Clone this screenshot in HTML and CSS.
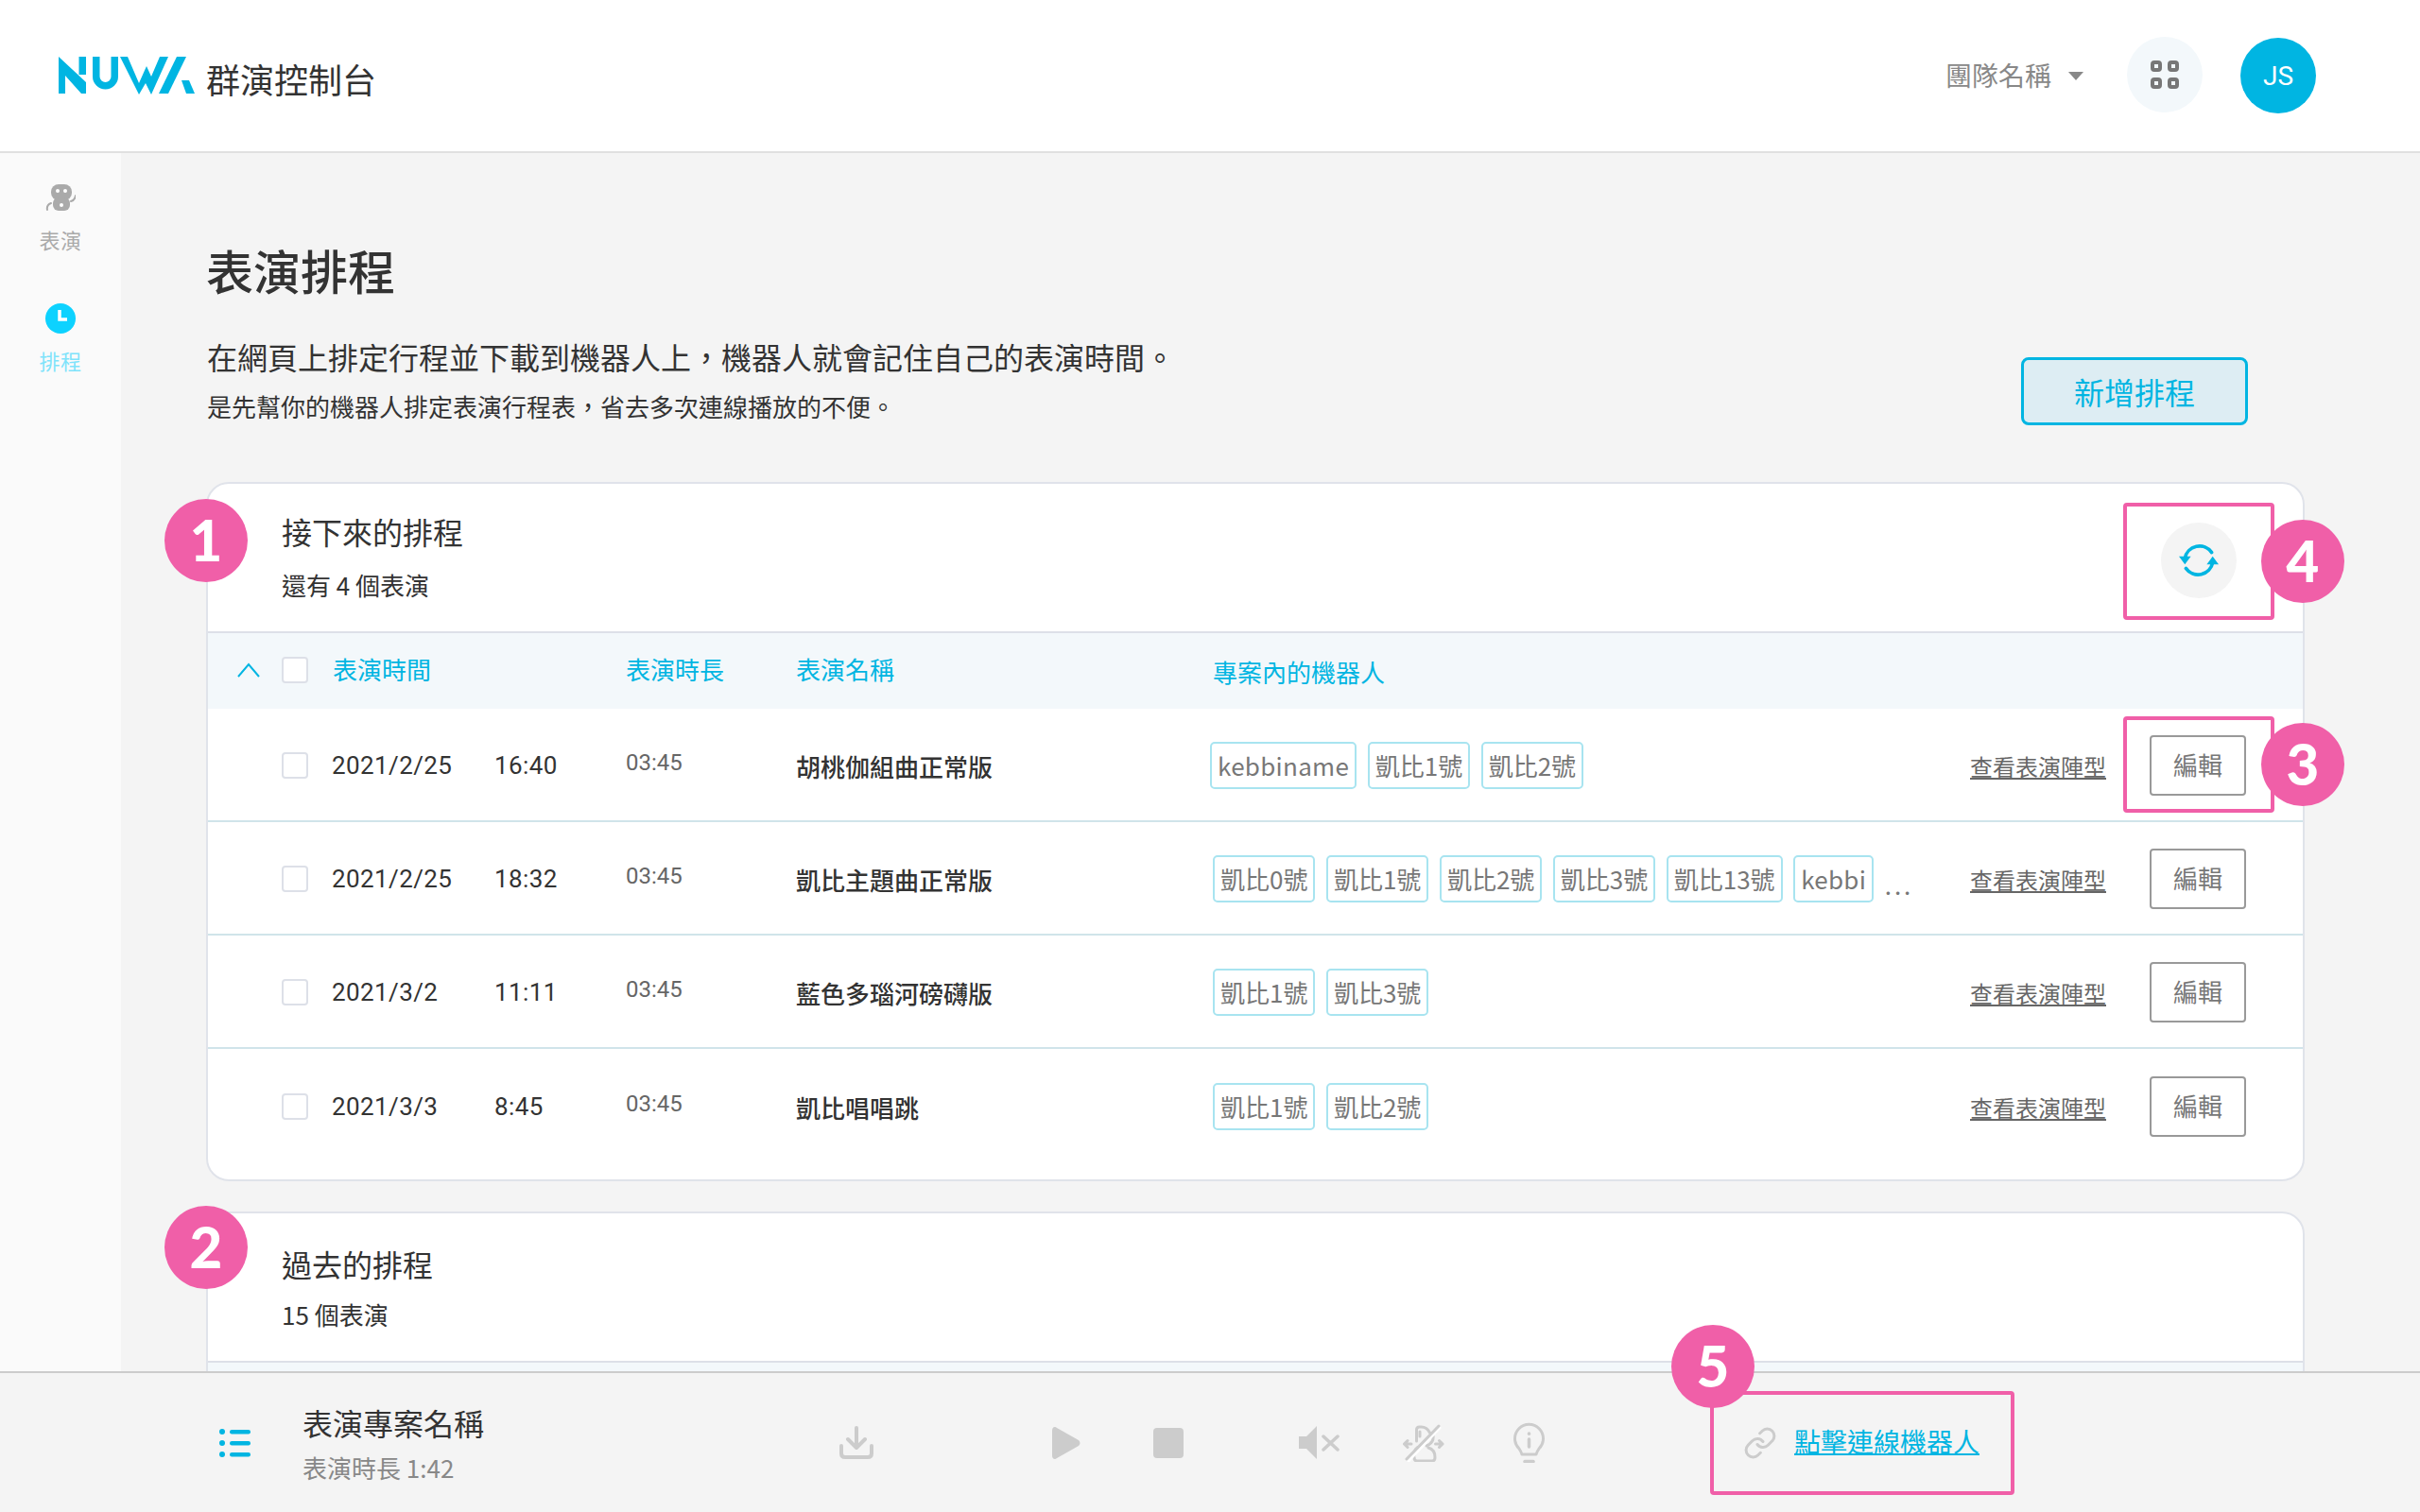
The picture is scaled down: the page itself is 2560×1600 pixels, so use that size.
FILE: index.html
```html
<!DOCTYPE html>
<html lang="zh-Hant">
<head>
  <meta charset="UTF-8">
  <title>群演控制台</title>
  <link rel="stylesheet" href="styles.css">
</head>
<body>
  <div class="app">
    <!-- top bar -->
    <header class="topbar">
      <svg class="logo" viewBox="0 0 144 40" aria-label="NUWA">
        <polygon points="0,0 29,27 29,39 24,39 7,20 7,39 0,39"/>
        <rect x="21.500" y="0" width="7.500" height="19"/>
        <path d="M36 0v21a13.500 13.500 0 0 0 27 0V0h-7.500v21a6 6 0 0 1-12 0V0z"/>
        <polygon points="65,0 73,0 85,28 93,10 98,21 107,0 116,0 98,40 92,28 85,40"/>
        <polygon points="125,0 135,0 116,39 106,39"/>
        <polygon points="130,25 138,25 144,39 135,39"/>
      </svg>
      <span class="app-name">群演控制台</span>
      <div class="topbar-right">
        <span class="team">團隊名稱</span>
        <span class="team-arrow"></span>
        <button class="apps-btn">
          <svg viewBox="0 0 30 30" width="30" height="30">
            <rect x="2" y="2" width="8" height="8" rx="2"/>
            <rect x="20" y="2" width="8" height="8" rx="2"/>
            <rect x="2" y="20" width="8" height="8" rx="2"/>
            <rect x="20" y="20" width="8" height="8" rx="2"/>
          </svg>
        </button>
        <div class="avatar">JS</div>
      </div>
    </header>

    <div class="middle">
      <!-- side nav -->
      <nav class="sidebar">
        <a class="nav-item">
          <svg class="nav-icon" viewBox="0 0 32 32">
            <rect x="6" y="2" width="22" height="17" rx="8" fill="#aaa"/>
            <rect x="8" y="16" width="18" height="14" rx="6" fill="#aaa"/>
            <circle cx="13" cy="9" r="2" fill="#fff"/>
            <circle cx="21" cy="9" r="2" fill="#fff"/>
            <circle cx="17" cy="24" r="2" fill="#fff"/>
            <path d="M27 20q4-1 5-6M2 29q-1-5 4-7" fill="none" stroke="#aaa" stroke-width="2" stroke-linecap="round"/>
          </svg>
          <span>表演</span>
        </a>
        <a class="nav-item active">
          <svg class="nav-icon" viewBox="0 0 32 32">
            <circle cx="16" cy="16" r="16" fill="#0dd2ff"/>
            <path d="M15 7v10h8" fill="none" stroke="#fff" stroke-width="3.500"/>
          </svg>
          <span>排程</span>
        </a>
      </nav>

      <main class="content">
        <section class="intro">
          <div>
            <h1>表演排程</h1>
            <p class="intro-lead">在網頁上排定行程並下載到機器人上，機器人就會記住自己的表演時間。</p>
            <p class="intro-sub">是先幫你的機器人排定表演行程表，省去多次連線播放的不便。</p>
          </div>
          <button class="add-btn">新增排程</button>
        </section>

        <!-- upcoming -->
        <section class="card">
          <div class="card-head">
            <div>
              <h2>接下來的排程</h2>
              <p>還有 4 個表演</p>
            </div>
            <button class="refresh-btn">
              <svg viewBox="0 0 40 36" width="42" height="38" fill="none" stroke="#00b5e2" stroke-width="3.500" stroke-linecap="round">
                <path d="M33 10A15 15 0 0 0 6 16"/>
                <path d="M7 26A15 15 0 0 0 34 20"/>
                <polygon points="0,14 12,14 6,22" fill="#00b5e2" stroke="none"/>
                <polygon points="28,22 40,22 34,14" fill="#00b5e2" stroke="none"/>
              </svg>
            </button>
          </div>

          <div class="row table-head">
            <svg class="chevron" viewBox="0 0 24 16" width="24" height="16">
              <polyline points="1,15 12,2 23,15" fill="none" stroke="#00b5e2" stroke-width="2"/>
            </svg>
            <span class="checkbox"></span>
            <span class="span-two">表演時間</span>
            <span>表演時長</span>
            <span>表演名稱</span>
            <span class="head-robots">專案內的機器人</span>
          </div>

          <div class="row item">
            <span></span>
            <span class="checkbox"></span>
            <span class="date">2021/2/25</span>
            <span class="date">16:40</span>
            <span class="length">03:45</span>
            <span class="show-name">胡桃伽組曲正常版</span>
            <div class="tags tags-first">
              <span class="tag tag-latin">kebbiname</span>
              <span class="tag">凱比1號</span>
              <span class="tag">凱比2號</span>
            </div>
            <a class="formation">查看表演陣型</a>
            <button class="edit-btn">編輯</button>
          </div>

          <div class="row item">
            <span></span>
            <span class="checkbox"></span>
            <span class="date">2021/2/25</span>
            <span class="date">18:32</span>
            <span class="length">03:45</span>
            <span class="show-name">凱比主題曲正常版</span>
            <div class="tags">
              <span class="tag">凱比0號</span>
              <span class="tag">凱比1號</span>
              <span class="tag">凱比2號</span>
              <span class="tag">凱比3號</span>
              <span class="tag">凱比13號</span>
              <span class="tag tag-latin">kebbi</span>
              <span class="more">...</span>
            </div>
            <a class="formation">查看表演陣型</a>
            <button class="edit-btn">編輯</button>
          </div>

          <div class="row item">
            <span></span>
            <span class="checkbox"></span>
            <span class="date">2021/3/2</span>
            <span class="date">11:11</span>
            <span class="length">03:45</span>
            <span class="show-name">藍色多瑙河磅礴版</span>
            <div class="tags">
              <span class="tag">凱比1號</span>
              <span class="tag">凱比3號</span>
            </div>
            <a class="formation">查看表演陣型</a>
            <button class="edit-btn">編輯</button>
          </div>

          <div class="row item">
            <span></span>
            <span class="checkbox"></span>
            <span class="date">2021/3/3</span>
            <span class="date">8:45</span>
            <span class="length">03:45</span>
            <span class="show-name">凱比唱唱跳</span>
            <div class="tags">
              <span class="tag">凱比1號</span>
              <span class="tag">凱比2號</span>
            </div>
            <a class="formation">查看表演陣型</a>
            <button class="edit-btn">編輯</button>
          </div>
        </section>

        <!-- past -->
        <section class="card card-past">
          <div class="card-head">
            <div>
              <h2>過去的排程</h2>
              <p>15 個表演</p>
            </div>
          </div>
          <div class="row table-head"></div>
        </section>
      </main>
    </div>

    <!-- player bar -->
    <footer class="player">
      <svg class="list-icon" viewBox="0 0 33 30" width="33" height="30">
        <ellipse cx="3" cy="3" rx="3" ry="3"/>
        <ellipse cx="3" cy="15" rx="3" ry="3"/>
        <ellipse cx="3" cy="27" rx="3" ry="3"/>
        <rect x="11" y="1" width="22" height="4.500" rx="2.200"/>
        <rect x="11" y="13" width="22" height="4.500" rx="2.200"/>
        <rect x="11" y="25" width="22" height="4.500" rx="2.200"/>
      </svg>
      <div class="player-info">
        <div class="player-title">表演專案名稱</div>
        <div class="player-sub">表演時長 1:42</div>
      </div>
      <svg viewBox="0 0 36 35" width="36" height="35" fill="none" stroke="#ccc" stroke-width="4" stroke-linecap="round" stroke-linejoin="round">
        <path d="M18 2V22M9 14l9 9 9-9M2 21v8q0 4 4 4h24q4 0 4-4v-8"/>
      </svg>
      <svg viewBox="0 0 30 34" width="30" height="34">
        <path d="M0 4Q0 0 3 0Q4 0 5 1L28 14Q31 17 28 20L5 33Q4 34 3 34Q0 34 0 30Z" fill="#ccc"/>
      </svg>
      <div class="stop-icon"></div>
      <svg viewBox="0 0 43 35" width="43" height="35">
        <path d="M0 11H8L19 0V35L8 24H0Z" fill="#ccc"/>
        <path d="M26 11L41 25M41 11L26 25" stroke="#ccc" stroke-width="3.500" stroke-linecap="round"/>
      </svg>
      <svg viewBox="0 0 44 40" width="44" height="40" fill="none" stroke="#ccc" stroke-width="3" stroke-linecap="round" stroke-linejoin="round">
        <path d="M14.500 18V6q0-3 3-3h2q6 0 9 6"/>
        <path d="M18 8v5"/>
        <path d="M32 12q1 8-7 11"/>
        <path d="M12 33q0-8 6-9M27 25q7 2 7 10 0 4-3 4H15q-3 0-3-4"/>
        <path d="M9 21H1.500M5 17.500L1.500 21 5 24.500M34.500 21H42M38.500 17.500L42 21 38.500 24.500"/>
        <path d="M6 39L39 4" stroke="#fff" stroke-width="3"/>
        <path d="M4 37L38 2"/>
      </svg>
      <svg viewBox="0 0 33 43" width="33" height="43" fill="none" stroke="#ccc" stroke-width="3" stroke-linecap="round">
        <path d="M9 34q-1-3-3-6A15 15 0 1 1 27 28q-2 3-3 6z" stroke-linejoin="round"/>
        <path d="M16.500 18v8" stroke-width="3.500"/>
        <path d="M16.500 12v.2" stroke-width="3.500"/>
        <path d="M12 41.500h9" stroke-width="3.500"/>
      </svg>
      <a class="connect">
        <svg viewBox="0 0 24 24" width="36" height="36" fill="none" stroke="#ccc" stroke-width="2" stroke-linecap="round" stroke-linejoin="round">
          <path d="M10 13a5 5 0 0 0 7.540.540l3-3a5 5 0 0 0-7.070-7.070l-1.720 1.710"/>
          <path d="M14 11a5 5 0 0 0-7.540-.540l-3 3a5 5 0 0 0 7.070 7.070l1.710-1.710"/>
        </svg>
        <span class="connect-text">點擊連線機器人</span>
      </a>
    </footer>
  </div>

  <!-- pink annotations laid over the screen -->
  <div class="mark-box box-refresh"></div>
  <div class="mark-box box-edit"></div>
  <div class="mark-box box-connect"></div>
  <div class="mark mark-1">1</div>
  <div class="mark mark-2">2</div>
  <div class="mark mark-3">3</div>
  <div class="mark mark-4">4</div>
  <div class="mark mark-5">5</div>
</body>
</html>
```

FILE: styles.css
```css
* {
  box-sizing: border-box;
}

body {
  margin: 0;
  position: relative;
  width: 2560px;
  height: 1600px;
  overflow: hidden;
  background-color: #f4f4f4;
  color: #333;
  font-family: "Noto Sans CJK TC", "Noto Sans", sans-serif;
}

h1, h2, p {
  margin: 0;
  font-weight: 400;
}

button {
  font-family: inherit;
  cursor: pointer;
}

.app {
  display: flex;
  flex-direction: column;
  height: 1600px;
}

/* Top bar */
.topbar {
  display: flex;
  align-items: center;
  flex: none;
  height: 162px;
  padding: 0 110px 0 62px;
  background-color: #fff;
  border-bottom: 2px solid #e0e0e0;
}

.logo {
  width: 144px;
  height: 40px;
  fill: #00b5e2;
}

.app-name {
  margin: 6px 0 0 12px;
  font-size: 36px;
  line-height: 50px;
}

.topbar-right {
  display: flex;
  align-items: center;
  margin-left: auto;
}

.team {
  margin-bottom: 2px;
  font-size: 28px;
  color: #888;
}

.team-arrow {
  width: 0;
  height: 0;
  margin: 0 46px 0 18px;
  border-left: 8px solid transparent;
  border-right: 8px solid transparent;
  border-top: 9px solid #888;
}

.apps-btn {
  display: flex;
  align-items: center;
  justify-content: center;
  width: 80px;
  height: 80px;
  margin-bottom: 2px;
  padding: 0;
  background-color: #f3f8fb;
  border: none;
  border-radius: 50%;
}

.apps-btn svg {
  fill: none;
  stroke: #777;
  stroke-width: 4;
}

.avatar {
  display: flex;
  align-items: center;
  justify-content: center;
  width: 80px;
  height: 80px;
  margin-left: 40px;
  background-color: #00b5e2;
  border-radius: 50%;
  color: #fff;
  font-family: Roboto, sans-serif;
  font-size: 28px;
}

.middle {
  display: flex;
  flex: 1;
  min-height: 0;
  overflow: hidden;
}

/* Side nav */
.sidebar {
  flex: none;
  width: 128px;
  padding-top: 31px;
  background-color: #fafafa;
}

.nav-item {
  display: flex;
  flex-direction: column;
  align-items: center;
  gap: 13px;
  margin-bottom: 53px;
  font-size: 22px;
  letter-spacing: 0.5px;
  line-height: 30px;
  color: #aaa;
}

.nav-item.active {
  color: #7fe3fb;
}

.nav-icon {
  width: 32px;
  height: 32px;
}

/* Main */
.content {
  flex: 1;
  padding: 88px 122px 0 90px;
}

.intro {
  display: flex;
  align-items: flex-end;
  justify-content: space-between;
  padding-right: 60px;
}

.intro h1 {
  font-size: 50px;
  line-height: 70px;
  font-weight: 500;
}

.intro-lead {
  margin-top: 35px;
  margin-left: 1px;
  font-size: 32px;
  line-height: 44px;
}

.intro-sub {
  margin: 13px 0 2px 1px;
  font-size: 26px;
  line-height: 36px;
}

.add-btn {
  width: 240px;
  height: 72px;
  background-color: #ddedf3;
  border: 3px solid #00b5e2;
  border-radius: 8px;
  color: #00b5e2;
  font-size: 32px;
}

/* Cards */
.card {
  margin-top: 60px;
  padding-bottom: 18px;
  background-color: #fff;
  border: 2px solid #e0e3ea;
  border-radius: 24px;
}

.card-past {
  margin-top: 32px;
}

.card-head {
  display: flex;
  align-items: flex-start;
  justify-content: space-between;
  height: 156px;
  padding: 28px 70px 0 78px;
}

.card-head h2 {
  font-size: 32px;
  line-height: 44px;
}

.card-head p {
  margin-top: 17px;
  font-size: 26px;
  line-height: 36px;
}

.card-past .card-head {
  padding-top: 31px;
}

.card-past .card-head p {
  margin-top: 14px;
}

.refresh-btn {
  display: flex;
  align-items: center;
  justify-content: center;
  width: 80px;
  height: 80px;
  margin-top: 13px;
  padding: 0;
  background-color: #f4f4f4;
  border: none;
  border-radius: 50%;
}

/* Table rows share one set of columns */
.row {
  display: grid;
  grid-template-columns: 78px 53px 172px 139px 180px 441px 801px 190px 102px;
  align-items: center;
}

.table-head {
  height: 82px;
  padding-bottom: 2px;
  background-color: #f3f8fb;
  border-top: 2px solid #dde0e8;
  color: #00b5e2;
  font-size: 26px;
}

.table-head span {
  margin-bottom: 4px;
}

.table-head .checkbox {
  margin-bottom: 0;
}

.table-head .head-robots {
  margin: 2px 0 0;
}

.span-two {
  grid-column: span 2;
  padding-left: 1px;
}

.chevron {
  margin-left: 31px;
}

.checkbox {
  display: block;
  width: 28px;
  height: 28px;
  background-color: #fff;
  border: 2px solid #dde0e8;
  border-radius: 4px;
}

.item {
  height: 120px;
  padding-top: 2px;
  border-bottom: 2px solid #d0e4ea;
}

.item:last-child {
  border-bottom: none;
}

.date {
  font-family: Roboto, sans-serif;
  font-size: 26px;
  letter-spacing: 0.4px;
}

.length {
  margin-bottom: 6px;
  font-family: Roboto, sans-serif;
  font-size: 24px;
  color: #666;
}

.show-name {
  font-size: 26px;
  font-weight: 500;
}

.tags {
  display: flex;
  align-items: center;
  gap: 11.5px;
}

.tags-first {
  margin-left: -3px;
}

.tag {
  height: 50px;
  padding: 0 6px;
  background-color: #fff;
  border: 2px solid #a8e4f0;
  border-radius: 5px;
  color: #777;
  font-size: 26px;
  line-height: 46px;
  white-space: nowrap;
}

.tag-latin {
  letter-spacing: 0.3px;
}

.more {
  margin-top: 10px;
  color: #777;
  font-size: 26px;
  letter-spacing: 3px;
}

.formation {
  color: #666;
  font-size: 24px;
  text-decoration: underline;
}

.edit-btn {
  width: 102px;
  height: 64px;
  padding: 0 0 3px;
  background-color: #fff;
  border: 2px solid #999;
  border-radius: 4px;
  color: #777;
  font-size: 26px;
}

/* Player bar */
.player {
  display: grid;
  grid-template-columns: 88px 568px 225px 107px 154px 110px 117px 208px auto;
  align-items: center;
  flex: none;
  height: 149px;
  padding-left: 232px;
  background-color: #f4f4f4;
  border-top: 2px solid #ccc;
}

.list-icon {
  fill: #00b5e2;
}

.player-title {
  font-size: 32px;
  line-height: 44px;
}

.player-sub {
  margin-top: 8px;
  color: #888;
  font-size: 26px;
  line-height: 36px;
}

.stop-icon {
  width: 32px;
  height: 32px;
  background-color: #ccc;
  border-radius: 4px;
}

.connect {
  display: flex;
  align-items: center;
  gap: 18px;
  padding-left: 35px;
}

.connect-text {
  margin-bottom: 3px;
  color: #00b5e2;
  font-size: 28px;
  text-decoration: underline;
  text-decoration-thickness: 2px;
}

/* Annotations */
.mark {
  position: absolute;
  display: flex;
  align-items: center;
  justify-content: center;
  width: 88px;
  height: 88px;
  padding-bottom: 2px;
  background-color: #f05fa8;
  border-radius: 50%;
  color: #fff;
  font-family: Lato, sans-serif;
  font-size: 60px;
  font-weight: 900;
}

.mark-1 { left: 174px; top: 528px; }
.mark-2 { left: 174px; top: 1276px; }
.mark-3 { left: 2392px; top: 765px; }
.mark-4 { left: 2392px; top: 550px; }
.mark-5 { left: 1768px; top: 1402px; }

.mark-box {
  position: absolute;
  border: 4px solid #f05fa8;
  border-radius: 4px;
}

.box-refresh { left: 2246px; top: 532px; width: 160px; height: 124px; }
.box-edit { left: 2246px; top: 758px; width: 160px; height: 102px; }
.box-connect { left: 1809px; top: 1472px; width: 322px; height: 110px; }
```
